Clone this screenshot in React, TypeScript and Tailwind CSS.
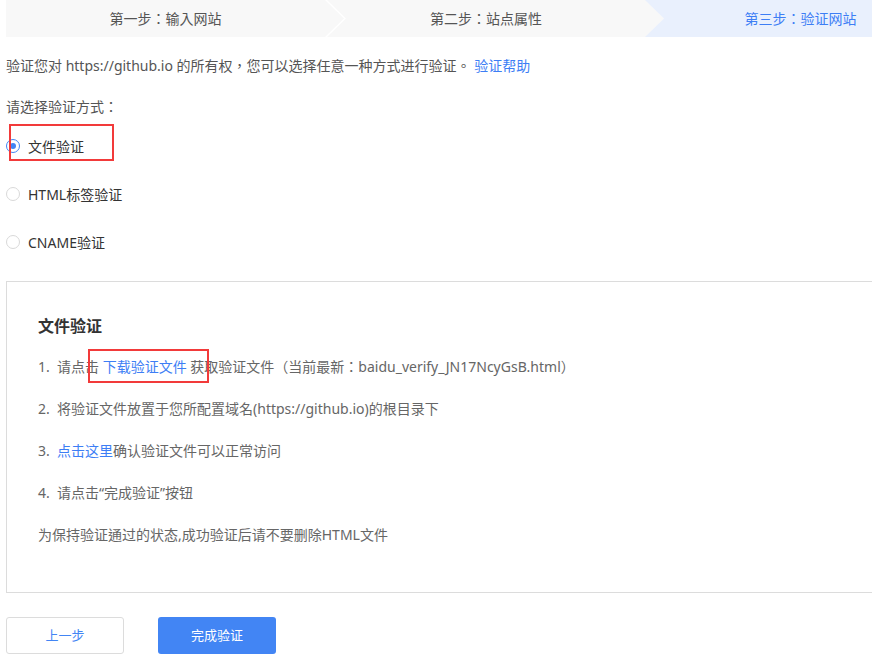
import React from 'react'

const font = { fontFamily: '"Noto Sans", "Noto Sans CJK TC", sans-serif' }

function Steps() {
  return (
    <div className="flex h-[37px] text-[14px] leading-[37px]">
      <div className="relative z-20 w-[338px] shrink-0 bg-[#f8f8f8] pr-[19px] text-center text-[#555] [clip-path:polygon(0_0,calc(100%-19px)_0,100%_50%,calc(100%-19px)_100%,0_100%)]">
        第一步：输入网站
      </div>
      <div className="relative z-10 -ml-[17px] w-[337px] shrink-0 bg-[#f8f8f8] pr-[19px] text-center text-[#555] [clip-path:polygon(0_0,calc(100%-19px)_0,100%_50%,calc(100%-19px)_100%,0_100%,19px_50%)]">
        第二步：站点属性
      </div>
      <div className="-ml-[19px] w-[330px] shrink-0 bg-[#e9f0fd] pr-[19px] text-center text-[#3d7ef5]">
        第三步：验证网站
      </div>
    </div>
  )
}

function Radio({ checked, label, marked }: { checked?: boolean; label: string; marked?: boolean }) {
  return (
    <div className="relative flex h-5 items-center">
      <span
        className={
          checked
            ? 'flex h-[14px] w-[14px] items-center justify-center rounded-full border border-[#4285f4] bg-white'
            : 'h-[14px] w-[14px] rounded-full border border-[#d9d9d9] bg-white'
        }
      >
        {checked && <span className="h-[6px] w-[6px] rounded-full bg-[#4285f4]" />}
      </span>
      <span className="ml-[8px] text-[14px] text-[#333]">{label}</span>
      {marked && (
        <span className="absolute left-[3px] top-[-12px] h-[37px] w-[105px] border-2 border-[#f23a3a]" />
      )}
    </div>
  )
}

export default function App() {
  return (
    <div className="w-full overflow-hidden bg-white" style={font}>
      <div className="w-[1000px] pl-[6px]">
        <Steps />

        <p className="mt-[19px] text-[14px] leading-5 text-[#555]">
          验证您对 https://github.io 的所有权，您可以选择任意一种方式进行验证。{' '}
          <span className="text-[#3d7ef5]">验证帮助</span>
        </p>

        <p className="mt-[21px] text-[14px] leading-5 text-[#555]">请选择验证方式：</p>

        <div className="mt-[19px] flex flex-col gap-[28px]">
          <Radio checked label="文件验证" marked />
          <Radio label="HTML标签验证" />
          <Radio label="CNAME验证" />
        </div>

        <div className="mt-[29px] border border-[#dcdcdc] pb-[47px] pl-[31px] pt-[32px] text-[14px] leading-5 text-[#666]">
          <h3 className="text-[16px] font-bold leading-6 text-[#333]">文件验证</h3>
          <p className="mt-[19px]">
            1.&nbsp; 请点击{' '}
            <span className="relative text-[#3d7ef5]">
              下载验证文件
              <span className="absolute left-[-15px] top-[-8px] h-[34px] w-[121px] border-2 border-[#f23a3a]" />
            </span>{' '}
            获取验证文件（当前最新：baidu_verify_JN17NcyGsB.html）
          </p>
          <p className="mt-[22px]">2.&nbsp; 将验证文件放置于您所配置域名(https://github.io)的根目录下</p>
          <p className="mt-[22px]">
            3.&nbsp; <span className="text-[#3d7ef5]">点击这里</span>确认验证文件可以正常访问
          </p>
          <p className="mt-[22px]">4.&nbsp; 请点击“完成验证”按钮</p>
          <p className="mt-[22px]">为保持验证通过的状态,成功验证后请不要删除HTML文件</p>
        </div>

        <div className="mt-[24px] flex gap-[34px] pb-[11px]">
          <button className="h-[37px] w-[118px] rounded-[3px] border border-[#dcdcdc] bg-white text-[13px] text-[#4285f4]">
            上一步
          </button>
          <button className="h-[37px] w-[118px] rounded-[3px] bg-[#4285f4] text-[13px] text-white">
            完成验证
          </button>
        </div>
      </div>
    </div>
  )
}
